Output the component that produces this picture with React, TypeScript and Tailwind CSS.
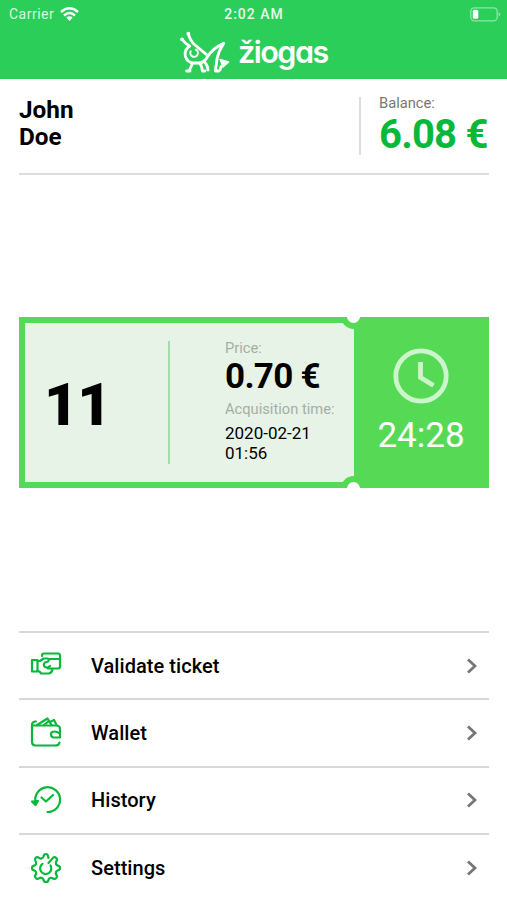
import { ReactNode } from "react";

const Grasshopper = () => (
  <svg width="60" height="50" viewBox="0 0 180 150" fill="none" stroke="white" strokeWidth="8.500" strokeLinecap="round" strokeLinejoin="round">
    <path d="M37 17 Q43 40 57 51 L91 79" />
    <path d="M18 34 Q26 46 41 54 Q24 66 28 84 Q33 104 53 105 L71 105 Q86 102 94 87 Q109 61 143 46 Q128 68 123 93 L118 129 L129 129 Q134 125 135 116" />
    <circle cx="37" cy="17" r="1.500" />
    <circle cx="18" cy="34" r="1.500" />
    <path d="M44 70 A11.500 11.500 0 1 0 60 65" strokeWidth="6" />
    <path d="M49 108 L39 129 M32 129 L42 129 M72 107 Q78 114 79 129 L87 129" />
    <path d="M86 103 Q95 112 96 126" />
    <path d="M132 94 L158 102 L141 117 Z" fill="white" strokeWidth="4" />
  </svg>
);

const WifiIcon = () => (
  <svg width="19" height="14" viewBox="0 0 19 14" fill="none" stroke="white" strokeWidth="2.400">
    <path d="M1 5 Q9.500 -2.500 18 5" />
    <path d="M4 8.500 Q9.500 3.700 15 8.500" />
    <path d="M6.300 10.600 Q9.500 8 12.700 10.600 L9.500 14 Z" fill="white" stroke="none" />
  </svg>
);

const BatteryIcon = () => (
  <svg width="31" height="15" viewBox="0 0 31 15" fill="none">
    <rect x="0.800" y="0.800" width="26.400" height="13" rx="3.500" stroke="#8ce8a5" strokeWidth="1.300" />
    <rect x="2.800" y="2.800" width="5.500" height="9" rx="1.500" fill="white" />
    <path d="M28.700 5 Q32 7.300 28.700 9.600 Z" fill="#8ce8a5" />
  </svg>
);

const ClockIcon = () => (
  <svg width="56" height="56" viewBox="0 0 56 56" fill="none" stroke="#ccf5cd" strokeWidth="4.800">
    <circle cx="28" cy="28" r="25.200" />
    <path d="M27.500 14 V29.500 L40.500 37.500" />
  </svg>
);

const ticketIcon = (
  <>
    <path d="M2 10 H7.500 V21.500 H2 Z" />
    <path d="M7.500 11 H10 L13.500 8.500 H17.500 Q20 9.500 18 11.500 L15 12.500 Q12.500 14.500 15 17 Q18 18.500 20 16" />
    <path d="M12 6 V5.500 Q12 3.500 14 3.500 H28 Q30 3.500 30 5.500 V16.500 Q30 18.500 28 18.500 H18" />
    <path d="M20 9 H30" />
    <path d="M7.500 21 Q10 21 11 23.500 H19 Q22 23 22.500 19" />
  </>
);

const walletIcon = (
  <>
    <path d="M6 4.500 H5 Q2 5 2 8 V25 Q2 28.500 5.500 28.500 H25 Q29 28.500 29.500 25.500" />
    <path d="M2.500 8.500 H26 Q30 8.500 30 12 V20.500 H24 A3 3 0 0 1 24 14.500 Q27 14.300 29.500 16.500" />
    <path d="M7 8 L17.500 1.500 L21.500 8 M14 8 L19 4 M21 4.500 L24 3 L26.500 8" />
  </>
);

const historyIcon = (
  <>
    <path d="M5.500 18 A12.400 12.400 0 1 1 17.500 28" />
    <path d="M2 17.500 L5.500 21 L8 17 Z" fill="#07b83b" />
    <path d="M11.500 13.500 L16 17.500 L23 11" />
  </>
);

const settingsIcon = (
  <>
    <path d="M18.500 6 Q18 2 16 2 Q13.800 2 13.500 4.500 Q13 6 11.500 6.500 Q10 7 8.500 5.500 Q7 4.500 5.500 6 Q4.300 7.500 5.500 9 Q6.500 10.500 6 12 Q5.500 13.500 4 13.600 Q2 14 2 16 Q2 18 4 18.400 Q5.500 18.500 6 20 Q6.700 21.500 5.500 23 Q4.300 24.500 5.800 26 Q7.300 27.500 9 26.300 Q10.500 25.200 12 26 Q13.300 26.500 13.600 28 Q13.900 30 16 30 Q18.200 30 18.500 28 Q18.700 26.500 20 26 Q21.500 25.300 23 26.500 Q24.700 27.500 26.200 26 Q27.700 24.500 26.500 23 Q25.300 21.500 26 20 Q26.500 18.600 28 18.400 Q30 18 30 16 Q30 14 28 13.600 Q26.500 13.300 26 12 Q25.400 10.500 26.500 9 Q27.700 7.300 26.200 6 Q24.700 4.500 23.200 5.600 L18.500 11" />
    <path d="M12.500 11.800 A5.600 5.600 0 1 0 20.500 13.500" />
  </>
);

const menuItems: { label: string; icon: ReactNode }[] = [
  { label: "Validate ticket", icon: ticketIcon },
  { label: "Wallet", icon: walletIcon },
  { label: "History", icon: historyIcon },
  { label: "Settings", icon: settingsIcon },
];

const Header = () => (
  <header className="h-[79px] bg-[#2bce59] text-white">
    <div className="grid h-7 grid-cols-3 items-center pl-[9px] pr-[6px] text-[14px]">
      <div className="flex items-center gap-[6px] tracking-[0.500px] text-[#d9f8e1]">
        Carrier
        <WifiIcon />
      </div>
      <div className="-ml-[2px] text-center font-medium tracking-[1px] text-[#e5faea]">2:02 AM</div>
      <div className="flex justify-end">
        <BatteryIcon />
      </div>
    </div>
    <div className="flex h-[50px] pl-[176px]">
      <Grasshopper />
      <span className="ml-[2px] mt-[4px] font-['Inter',sans-serif] text-[30.500px] font-semibold leading-[40px] tracking-[-1.500px] [font-feature-settings:'cv11']">
        žiogas
      </span>
    </div>
  </header>
);

const Ticket = () => (
  <section className="relative flex h-[171px] overflow-hidden bg-[#56d954]">
    <div className="my-[6px] ml-[6px] flex w-[329px] bg-[#e7f3e7]">
      <div className="flex w-[143px] items-center pl-[19px] pt-[4px]">
        <span className="text-[59px] font-black leading-none tracking-[-1px] text-black">11</span>
      </div>
      <div className="my-[18px] w-[2px] bg-[#a5dda9]" />
      <div className="pl-[55px] pt-[16px] text-black">
        <p className="text-[14.700px] leading-[18px] text-[#a5aea5]">Price:</p>
        <p className="text-[35px] font-bold leading-[40px] tracking-[-0.700px]">0.70 €</p>
        <p className="mt-[3px] whitespace-nowrap text-[14.700px] leading-[18px] text-[#a5aea5]">Acquisition time:</p>
        <p className="mt-[6px] text-[17px] leading-[19.500px]">
          2020-02-21
          <br />
          01:56
        </p>
      </div>
    </div>
    <div className="flex grow flex-col items-center pr-px pt-[31px]">
      <ClockIcon />
      <span className="mt-[12px] text-[35px] leading-[40px] text-white">24:28</span>
    </div>
    <div className="absolute left-[322px] top-[-13px] size-[25px] rounded-full border-[6px] border-[#56d954] bg-white" />
    <div className="absolute bottom-[-13px] left-[322px] size-[25px] rounded-full border-[6px] border-[#56d954] bg-white" />
  </section>
);

export default function App() {
  return (
    <div className="h-[900px] w-[507px] overflow-hidden bg-white font-['Roboto',sans-serif]">
      <Header />
      <main className="pl-[19px] pr-[18px]">
        <section className="flex h-[96px] justify-between border-b-2 border-[#dddddd] pt-[18px]">
          <h1 className="-mt-px text-[24.300px] font-bold leading-[27px] text-black">
            John
            <br />
            Doe
          </h1>
          <div className="h-[58px] w-[130px] border-l-2 border-[#dddddd] pl-[18px]">
            <p className="-mt-[2px] text-[14.700px] leading-[16px] text-[#777777]">Balance:</p>
            <p className="mt-px whitespace-nowrap text-[40px] font-bold leading-[46px] tracking-[-0.800px] text-[#07b83b]">6.08 €</p>
          </div>
        </section>
        <div className="mt-[142px]">
          <Ticket />
        </div>
        <nav className="mt-[143px]">
          {menuItems.map((item) => (
            <a key={item.label} className="flex h-[67.300px] items-center border-t-2 border-[#d8d8d8] pl-[11px] pr-[12px]">
              <svg width="32" height="32" viewBox="0 0 32 32" fill="none" stroke="#07b83b" strokeWidth="2.200" strokeLinecap="round" strokeLinejoin="round">
                {item.icon}
              </svg>
              <span className="ml-[29px] grow text-[20px] font-medium tracking-[0.050px] text-black">{item.label}</span>
              <svg width="10" height="16" viewBox="0 0 10 16" fill="none" stroke="#757575" strokeWidth="2.800">
                <path d="M1 1.500 L8 8 L1 14.500" />
              </svg>
            </a>
          ))}
        </nav>
      </main>
    </div>
  );
}
